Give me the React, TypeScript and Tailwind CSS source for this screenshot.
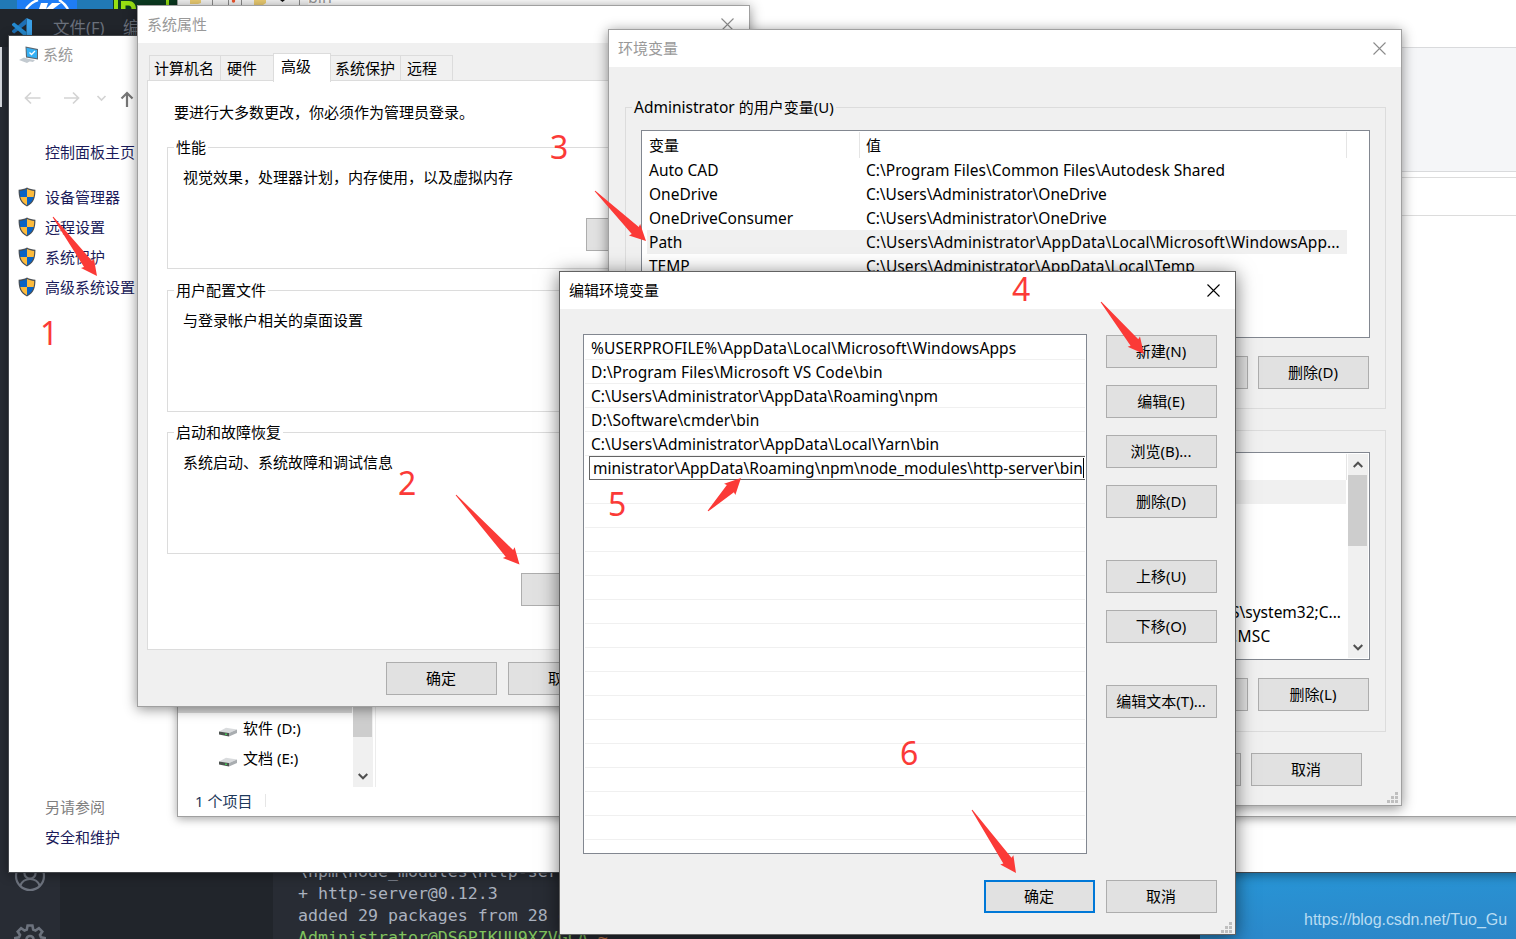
import type { ReactNode } from 'react';

type Kids = { children?: ReactNode; className?: string };

/* ---------- shared controls ---------- */

const Btn = ({ children, className = '' }: Kids) => (
  <button
    className={`flex h-[33px] w-[111px] shrink-0 items-center justify-center whitespace-nowrap border border-[#adadad] bg-[#e1e1e1] pb-[2px] pr-px text-black ${className}`}
  >
    {children}
  </button>
);

const Close = ({ className = '' }: { className?: string }) => (
  <svg viewBox="0 0 13 13" className={`h-[13px] w-[13px] shrink-0 ${className}`} fill="none" stroke="currentColor" strokeWidth="1.1">
    <path d="M0.5 0.5 L12.5 12.5 M12.5 0.5 L0.5 12.5" />
  </svg>
);

const Chevron = ({ up = false }: { up?: boolean }) => (
  <svg viewBox="0 0 10 7" className="h-[7px] w-[10px]" fill="none" stroke="#505050" strokeWidth="2">
    <path d={up ? 'M0.7 6 L5 1.7 L9.3 6' : 'M0.7 1 L5 5.3 L9.3 1'} />
  </svg>
);

const Group = ({ title, children, className = '' }: Kids & { title: string }) => (
  <fieldset className={`border border-[#dcdcdc] ${className}`}>
    <legend className="ml-[6px] h-6 whitespace-nowrap px-[2px] leading-6">{title}</legend>
    {children}
  </fieldset>
);

const Grip = () => (
  <svg viewBox="0 0 11 11" className="h-[11px] w-[11px]" fill="#bfbfbf">
    <path d="M8 0h3v3h-3z M4 4h3v3h-3z M8 4h3v3h-3z M0 8h3v3h-3z M4 8h3v3h-3z M8 8h3v3h-3z" />
  </svg>
);

const Shield = () => (
  <svg viewBox="0 0 18 20" className="h-5 w-[18px] shrink-0">
    <path d="M9 0.6 C6.5 2 3.5 2.7 0.6 2.8 C0.5 10.5 2 16 9 19.4 C16 16 17.5 10.5 17.4 2.8 C14.5 2.7 11.5 2 9 0.6Z" fill="#4a4f55" />
    <path d="M9 2 C6.8 3.2 4.3 3.8 1.8 3.9 C1.8 6 1.9 8 2.4 10 H9Z" fill="#0a63c4" />
    <path d="M9 2 C11.2 3.2 13.7 3.8 16.2 3.9 C16.2 6 16.1 8 15.6 10 H9Z" fill="#fdbb3c" />
    <path d="M2.4 10 C3.3 13.5 5.2 16.2 9 18.2 V10Z" fill="#fdbb3c" />
    <path d="M15.6 10 C14.7 13.5 12.8 16.2 9 18.2 V10Z" fill="#0a63c4" />
  </svg>
);

/* ---------- code editor in the background ---------- */

const Editor = () => (
  <div className="absolute left-0 top-[9px] flex h-[930px] w-[1200px] flex-col bg-[#282c34]">
    <div className="flex h-[38px] shrink-0 items-center bg-[#21252b] text-[16.5px] text-[#6a707b]">
      <svg viewBox="0 0 20 20" className="ml-3 h-5 w-5 shrink-0">
        <path d="M14.5 0 L20 2.3 V17.7 L14.5 20 Z" fill="#3aa0e8" />
        <path d="M14.5 0 V6 L2.2 15.6 L0 14 V12.8 Z" fill="#1d6fb5" />
        <path d="M14.5 20 V14 L2.2 4.4 L0 6 V7.2 Z" fill="#2489cf" />
      </svg>
      <span className="ml-[21px] w-[70px] whitespace-nowrap">文件(F)</span>
      <span>编</span>
    </div>
    <div className="flex min-h-0 grow">
      <div className="flex w-[60px] shrink-0 flex-col justify-between bg-[#282c34]">
        <div className="h-[60px] w-[2px] bg-[#d7dae0]" />
        <div className="ml-[14px] h-[78px] text-[#6c727d]">
          <svg viewBox="0 0 32 32" className="h-8 w-8" fill="none" stroke="currentColor" strokeWidth="2.2">
            <circle cx="16" cy="15" r="14" />
            <circle cx="16" cy="12" r="5.6" />
            <path d="M6 25 C8 20 11.5 18 16 18 S24 20 26 25" />
          </svg>
          <svg viewBox="0 0 32 32" className="mt-[30px] h-8 w-8" fill="none" stroke="currentColor" strokeWidth="2.6">
            <path d="M13.6 2.5 h4.8 l0.8 4 l2.3 1 l3.4-2.3 l3.4 3.4 l-2.3 3.4 l1 2.3 l4 0.8 v4.8 l-4 0.8 l-1 2.3 l2.3 3.4 l-3.4 3.4 l-3.4-2.3 h-11 l-3.4 2.3 l-3.4-3.4 l2.3-3.4 l-1-2.3 l-4-0.8 v-4.8 l4-0.8 l1-2.3 l-2.3-3.4 l3.4-3.4 l3.4 2.3 l2.3-1z" />
            <circle cx="16" cy="16.5" r="3.5" />
          </svg>
        </div>
      </div>
      <div className="w-[213px] shrink-0 bg-[#21252b]" />
      <div className="flex grow flex-col justify-end bg-[#282c34] pl-[25px]">
        <pre className="-mb-[10px] font-['DejaVu_Sans_Mono',monospace] text-[16.6px] leading-[22px] text-[#abb2bf]">
          {'\\npm\\node_modules\\http-ser\n+ http-server@0.12.3\nadded 29 packages from 28 c\n'}
          <span className="text-[#7fc25c]">Administrator@DS6PIKUU9XZVGCA</span> <span className="text-[#d08050]">~</span>
        </pre>
      </div>
    </div>
  </div>
);

const Desktop = () => (
  <div className="absolute inset-0 flex flex-col justify-between bg-[#2a8fd0]">
    <div className="flex h-[9px] bg-[#2179b5]">
      <svg viewBox="0 0 60 9" className="ml-[17px] h-[9px] w-[60px] bg-[#1e7df5]">
        <path d="M9 9 A24 24 0 0 1 21 0 M51 9 A24 24 0 0 0 42 0" fill="none" stroke="#fff" strokeWidth="2.4" />
        <path d="M24 3 h7 l-2 6 h-7z M35 3 h9 l-8 6 h-7z" fill="#fff" />
      </svg>
      <svg viewBox="0 0 65 9" className="ml-9 h-[9px] w-[65px] bg-[#0b3c22]">
        <path d="M1 0 h4 v9 h-4z M8 1 h8 c4 0 7 3 7 8 h-4.500 c0-2-1-3.500-3-3.500 h-3 v3.500 h-4.500z M53 0 h3 v9 h-3z" fill="#96e012" />
      </svg>
    </div>
    <div className="flex h-[80px] items-end justify-end bg-linear-to-br from-[#45aee4] via-[#2795d6] to-[#2c86c8] pb-[7px] pr-[9px] font-['Liberation_Sans',sans-serif] text-[16px] leading-6 tracking-[-0.07px] text-[#b9dcf2]">
      https://blog.csdn.net/Tuo_Gu
    </div>
  </div>
);

/* ---------- "System" control panel window ---------- */

const SystemWindow = () => (
  <div className="absolute left-2 top-[35px] flex h-[838px] w-[1520px] flex-col border border-[#45484c] bg-white shadow-[0_2px_10px_rgba(0,0,0,0.4)]">
    <div className="flex h-[36px] items-center pl-[10px] text-[#999999]">
      <svg viewBox="0 0 20 18" className="mr-1 mt-[2px] h-[18px] w-5">
        <path d="M6.5 0.5 L19 3 V13.5 L7 11.500 Z" fill="#5b6670" />
        <path d="M7.5 1.8 L18 4 V12.200 L8 10.500 Z" fill="#35b0f4" />
        <path d="M10.500 6.500 l2 2 l3.500-3.500" stroke="#fff" strokeWidth="1.3" fill="none" />
        <path d="M10 13 l6 1 l-2 2 l-5-1z M0 14 l5-2.500 l8 2.500 l-5 3z" fill="#c3cad0" />
      </svg>
      系统
    </div>
    <svg viewBox="0 0 128 26" className="mt-[13px] h-[26px] w-32 shrink-0" fill="none" strokeWidth="1.7">
      <path d="M31.500 13 H17 M22 7.500 L16.500 13 L22 18.500" stroke="#d4d4d4" />
      <path d="M55 13 H69.500 M64 7.500 L69.500 13 L64 18.500" stroke="#d4d4d4" />
      <path d="M88.500 11 L92.500 15 L96.500 11" stroke="#d4d4d4" />
      <path d="M118 22 V8 M112.500 13.500 L118 8 L123.500 13.500" stroke="#777" strokeWidth="2.2" />
    </svg>
    <div className="mt-[26px] flex grow flex-col leading-[30px] text-[#1b1b5a]">
      <div className="pl-[36px]">控制面板主页</div>
      <div className="mt-[15px] pl-[9px]">
        {['设备管理器', '远程设置', '系统保护', '高级系统设置'].map((t) => (
          <div key={t} className="flex h-[30px] items-center">
            <Shield />
            <span className="ml-[9px] whitespace-nowrap">{t}</span>
          </div>
        ))}
      </div>
      <div className="mb-[20px] mt-auto pl-[36px]">
        <div className="text-[#808080]">另请参阅</div>
        <div>安全和维护</div>
      </div>
    </div>
  </div>
);

/* ---------- file explorer ---------- */

const Drive = ({ children }: Kids) => (
  <div className="flex h-[30px] items-center pb-[2px] pl-10">
    <svg viewBox="0 0 20 10" className="mr-[5px] mt-2 h-[10px] w-5">
      <path d="M1 4.500 L8 0.800 L19 2.500 L11 6 Z" fill="#d9dbdd" />
      <path d="M1 4.500 L11 6 V9.500 L1 7.500 Z" fill="#4c524f" />
      <path d="M11 6 L19 2.500 V6 L11 9.500 Z" fill="#a9adb0" />
      <path d="M7 6.500 h2 v1.500 h-2z" fill="#42c254" />
    </svg>
    {children}
  </div>
);

const Explorer = () => (
  <div className="absolute -top-px left-[177px] flex h-[818px] w-[1360px] flex-col border border-[#a0a0a0] bg-white shadow-[0_2px_9px_rgba(0,0,0,0.35)]">
    <div className="relative flex h-[47px] items-start overflow-hidden">
      <svg viewBox="0 0 130 6" className="h-[6px] w-[130px] bg-[#f5f5f5]">
        <path d="M12 0 h11 v3 l-3 1 h-8z M76 0 h12 v3 l-3 2 h-9z" fill="#efcf73" />
        <path d="M34.500 0 v6 M50.500 0 v6 M63.500 0 v6 M121.500 0 v6" stroke="#8c8c8c" strokeWidth="1" />
        <circle cx="55.500" cy="1" r="1.700" fill="#f0562d" />
        <path d="M102 0 h5 l-2.500 2z" fill="#111" />
      </svg>
      <span className="-mt-[15px] text-[16px] leading-6 text-[#999]">bin</span>
    </div>
    <div className="h-[125px] shrink-0 border-y border-[#d9dadc] bg-[#f5f6f8]" />
    <div className="mt-[5px] h-[39px] shrink-0 border-y border-[#dcdcdc]" />
    <div className="flex min-h-0 grow items-end">
      <div className="w-[175px] pb-[13px]">
        <div className="h-[15px] w-[174px] bg-[#d9d9d9]" />
        <div className="mt-px flex flex-col">
          <Drive>软件 (D:)</Drive>
          <Drive>文档 (E:)</Drive>
        </div>
      </div>
      <div className="flex h-[90px] w-[20px] flex-col items-center justify-between bg-[#f0f0f0] pb-[7px] pr-px">
        <div className="h-10 w-full bg-[#cdcdcd]" />
        <Chevron />
      </div>
      <div className="ml-[2px] h-[90px] w-px bg-[#ececec]" />
    </div>
    <div className="flex h-[29px] shrink-0 items-center pb-[2px] pl-[17px] text-[#1e395b]">
      <span className="w-[70px]">1 个项目</span>
      <div className="h-[13px] w-px bg-[#e6e6e6]" />
    </div>
  </div>
);

/* ---------- "System properties" dialog ---------- */

const tab = 'flex items-center whitespace-nowrap border-t border-r border-[#dcdcdc] pb-[2px]';

const SystemProperties = () => (
  <div className="absolute left-[137px] top-[5px] flex h-[702px] w-[613px] flex-col border border-[#a0a0a0] bg-[#f0f0f0] shadow-[0_2px_12px_rgba(0,0,0,0.45)]">
    <div className="flex h-[37px] shrink-0 items-center justify-between bg-white pb-[2px] pl-[9px] pr-[15px] text-[#999]">
      系统属性
      <Close className="mt-px text-[#8c8c8c]" />
    </div>
    <div className="z-10 ml-[11px] mt-[10px] flex h-[28px] shrink-0 items-end">
      <div className={`${tab} h-[26px] w-[72px] border-l pl-[4px]`}>计算机名</div>
      <div className={`${tab} h-[26px] w-[52px] border-r-0 pl-[6px]`}>硬件</div>
      <div className={`${tab} -mb-px h-[29px] w-[58px] border-l bg-white pb-[4px] pl-[7px]`}>高级</div>
      <div className={`${tab} h-[26px] w-[70px] pl-[4px]`}>系统保护</div>
      <div className={`${tab} h-[26px] w-[52px] pl-[6px]`}>远程</div>
    </div>
    <div className="-mt-px ml-[9px] flex h-[570px] w-[592px] shrink-0 flex-col border border-[#dcdcdc] bg-white pl-[19px] pr-[18px] pt-[19px]">
      <p className="pl-[7px] leading-6">要进行大多数更改，你必须作为管理员登录。</p>
      <Group title="性能" className="mt-[11px] h-[134px]">
        <p className="mt-[6px] pl-[15px] leading-6">视觉效果，处理器计划，内存使用，以及虚拟内存</p>
        <Btn className="ml-[418px] mt-[29px]" />
      </Group>
      <Group title="用户配置文件" className="mt-[9px] h-[134px]">
        <p className="mt-[6px] pl-[15px] leading-6">与登录帐户相关的桌面设置</p>
      </Group>
      <Group title="启动和故障恢复" className="mt-[8px] h-[134px]">
        <p className="mt-[6px] pl-[15px] leading-6">系统启动、系统故障和调试信息</p>
      </Group>
      <Btn className="ml-[354px] mt-[19px]" />
    </div>
    <div className="mt-[12px] flex gap-[11px] pl-[248px]">
      <Btn>确定</Btn>
      <Btn>取消</Btn>
    </div>
  </div>
);

/* ---------- "Environment variables" dialog ---------- */

const userVars: [string, string, string][] = [
  ['Auto CAD', 'C:\\Program Files\\Common Files\\Autodesk Shared', 'tracking-[0.02px]'],
  ['OneDrive', 'C:\\Users\\Administrator\\OneDrive', 'tracking-[-0.04px]'],
  ['OneDriveConsumer', 'C:\\Users\\Administrator\\OneDrive', 'tracking-[-0.04px]'],
  ['Path', 'C:\\Users\\Administrator\\AppData\\Local\\Microsoft\\WindowsApp...', 'tracking-[0.1px]'],
  ['TEMP', 'C:\\Users\\Administrator\\AppData\\Local\\Temp', 'tracking-[0.07px]'],
];

const EnvironmentVariables = () => (
  <div className="absolute left-[608px] top-[29px] flex h-[777px] w-[794px] flex-col border border-[#a0a0a0] bg-[#f0f0f0] shadow-[0_2px_12px_rgba(0,0,0,0.45)]">
    <div className="flex h-[37px] shrink-0 items-center justify-between bg-white pb-[2px] pl-[9px] pr-[15px] text-[#999]">
      环境变量
      <Close className="mt-px text-[#8c8c8c]" />
    </div>
    <div className="flex flex-col px-[16px] pt-[28px]">
      <fieldset className="h-[314px] w-[761px] border border-[#dcdcdc]">
        <legend className="ml-[6px] h-6 px-[2px] text-[15.5px] leading-6">
          Administrator <span className="text-[15px]">的用户变量(U)</span>
        </legend>
        <div className="ml-[15px] mt-[11px] h-[208px] w-[729px] overflow-hidden border border-[#828790] bg-white">
          <div className="ml-[7px] mt-px flex h-[26px] items-center">
            <span className="h-full w-[211px] border-r border-[#e5e5e5] pt-px leading-6">变量</span>
            <span className="h-full w-[487px] border-r border-[#e5e5e5] pl-[6px] pt-px leading-6">值</span>
          </div>
          {userVars.map(([k, v, track]) => (
            <div key={k} className={`ml-[5px] flex h-6 w-[700px] items-center whitespace-pre text-[15.5px] ${k === 'Path' ? 'bg-[#f0f0f0]' : ''}`}>
              <span className="w-[219px] shrink-0 pl-[2px]">{k}</span>
              <span className={track}>{v}</span>
            </div>
          ))}
        </div>
        <div className="mr-[16px] mt-[18px] flex justify-end gap-[10px]">
          <Btn />
          <Btn>删除(D)</Btn>
        </div>
      </fieldset>
      <div className="mt-[21px] flex h-[302px] w-[761px] flex-col border border-[#dcdcdc]">
        <div className="ml-[15px] mt-[21px] flex h-[208px] w-[729px] justify-end border border-[#828790] bg-white p-px">
          <div className="flex grow flex-col">
            <div className="mr-[1px] h-[26px] border-r border-[#e5e5e5]" />
            <div className="mr-[2px] h-6 bg-[#f0f0f0]" />
            <div className="mt-24 flex flex-col pl-[588px] text-[15.5px] leading-6">
              <span>S\system32;C...</span>
              <span className="pl-[2px] tracking-[0.3px]">.MSC</span>
            </div>
          </div>
          <div className="flex w-[20px] flex-col items-center bg-[#f0f0f0] py-[7px] pr-px">
            <Chevron up />
            <div className="mt-[7px] h-[71px] w-[19px] self-start bg-[#cdcdcd]" />
            <div className="mt-auto flex">
              <Chevron />
            </div>
          </div>
        </div>
        <div className="mr-[16px] mt-[18px] flex justify-end gap-[10px]">
          <Btn />
          <Btn>删除(L)</Btn>
        </div>
      </div>
      <div className="mr-[23px] mt-[21px] flex justify-end gap-[10px]">
        <Btn />
        <Btn>取消</Btn>
      </div>
    </div>
    <div className="mt-auto flex justify-end pb-[2px] pr-[3px]">
      <Grip />
    </div>
  </div>
);

/* ---------- "Edit environment variable" dialog ---------- */

const paths: [string, string][] = [
  ['%USERPROFILE%\\AppData\\Local\\Microsoft\\WindowsApps', 'tracking-[0.1px]'],
  ['D:\\Program Files\\Microsoft VS Code\\bin', 'tracking-[0.1px]'],
  ['C:\\Users\\Administrator\\AppData\\Roaming\\npm', 'tracking-[0px]'],
  ['D:\\Software\\cmder\\bin', 'tracking-[0.07px]'],
  ['C:\\Users\\Administrator\\AppData\\Local\\Yarn\\bin', 'tracking-[0.02px]'],
];

const EditVariable = () => (
  <div className="absolute left-[559px] top-[271px] flex h-[664px] w-[677px] flex-col border border-[#626262] bg-[#f0f0f0] shadow-[0_3px_18px_rgba(0,0,0,0.55)]">
    <div className="flex h-[37px] shrink-0 items-center justify-between bg-white pb-[2px] pl-[9px] pr-[15px]">
      编辑环境变量
      <Close className="mt-px" />
    </div>
    <div className="flex pl-[23px] pt-[25px]">
      <div className="h-[520px] w-[504px] overflow-hidden border border-[#828790] bg-white p-px">
        {paths.map(([p, track]) => (
          <div key={p} className={`flex h-6 items-center whitespace-pre border-b border-[#f0f0f0] pl-[6px] text-[15.5px] ${track}`}>
            {p}
          </div>
        ))}
        <div className="ml-[4px] flex h-6 items-center whitespace-pre border border-r-0 border-[#646464] pl-[3px] text-[15.5px] tracking-[0.01px]">
          ministrator\AppData\Roaming\npm\node_modules\http-server\bin
          <span className="h-5 w-px shrink-0 bg-black" />
        </div>
        {Array.from({ length: 15 }, (_, i) => (
          <div key={i} className="h-6 border-b border-[#f0f0f0]" />
        ))}
      </div>
      <div className="ml-[19px] flex flex-col gap-[17px] pt-px">
        <Btn>新建(N)</Btn>
        <Btn>编辑(E)</Btn>
        <Btn>浏览(B)...</Btn>
        <Btn>删除(D)</Btn>
        <Btn className="mt-[25px]">上移(U)</Btn>
        <Btn>下移(O)</Btn>
        <Btn className="mt-[25px]">编辑文本(T)...</Btn>
      </div>
    </div>
    <div className="mt-[26px] flex gap-[11px] pl-[424px]">
      <button className="flex h-[33px] w-[111px] items-center justify-center border-2 border-[#0078d7] bg-[#e1e1e1] pb-[2px] pr-px">确定</button>
      <Btn>取消</Btn>
    </div>
    <div className="mt-auto flex justify-end pb-px pr-[3px]">
      <Grip />
    </div>
  </div>
);

/* ---------- red step annotations ---------- */

const arrows = [
  [53, 217, 97, 276],
  [456, 495, 519.5, 564.5],
  [595, 191, 646, 241],
  [1101, 302, 1144, 354],
  [708, 511, 741, 478],
  [972, 810, 1016, 873],
];

const arrowPoints = ([x1, y1, x2, y2]: number[]) => {
  const len = Math.hypot(x2 - x1, y2 - y1);
  const ux = (x2 - x1) / len;
  const uy = (y2 - y1) / len;
  const at = (back: number, side: number) => `${x2 - ux * back - uy * side},${y2 - uy * back + ux * side}`;
  return [at(len, 0.5), at(15, 5), at(16, 8), at(0, 0), at(16, -8), at(15, -5), at(len, -0.5)].join(' ');
};

const digit = 'absolute text-[32px] leading-8 text-[#fb3a37]';

const Annotations = () => (
  <>
    <svg viewBox="0 0 1516 939" className="absolute inset-0 h-full w-full" fill="#fb3a37">
      {arrows.map((a) => (
        <polygon key={a[0]} points={arrowPoints(a)} />
      ))}
    </svg>
    <span className={`${digit} left-[40px] top-[317px]`}>1</span>
    <span className={`${digit} left-[398px] top-[467px]`}>2</span>
    <span className={`${digit} left-[550px] top-[131px]`}>3</span>
    <span className={`${digit} left-[1012px] top-[273px]`}>4</span>
    <span className={`${digit} left-[608px] top-[488px]`}>5</span>
    <span className={`${digit} left-[900px] top-[737px]`}>6</span>
  </>
);

export default function App() {
  return (
    <div
      lang="zh-CN"
      className="relative h-[939px] w-[1516px] overflow-hidden font-['Noto_Sans','Noto_Sans_CJK_SC',sans-serif] text-[15px] leading-5 text-black"
    >
      <Desktop />
      <Editor />
      <SystemWindow />
      <Explorer />
      <SystemProperties />
      <EnvironmentVariables />
      <EditVariable />
      <Annotations />
    </div>
  );
}
